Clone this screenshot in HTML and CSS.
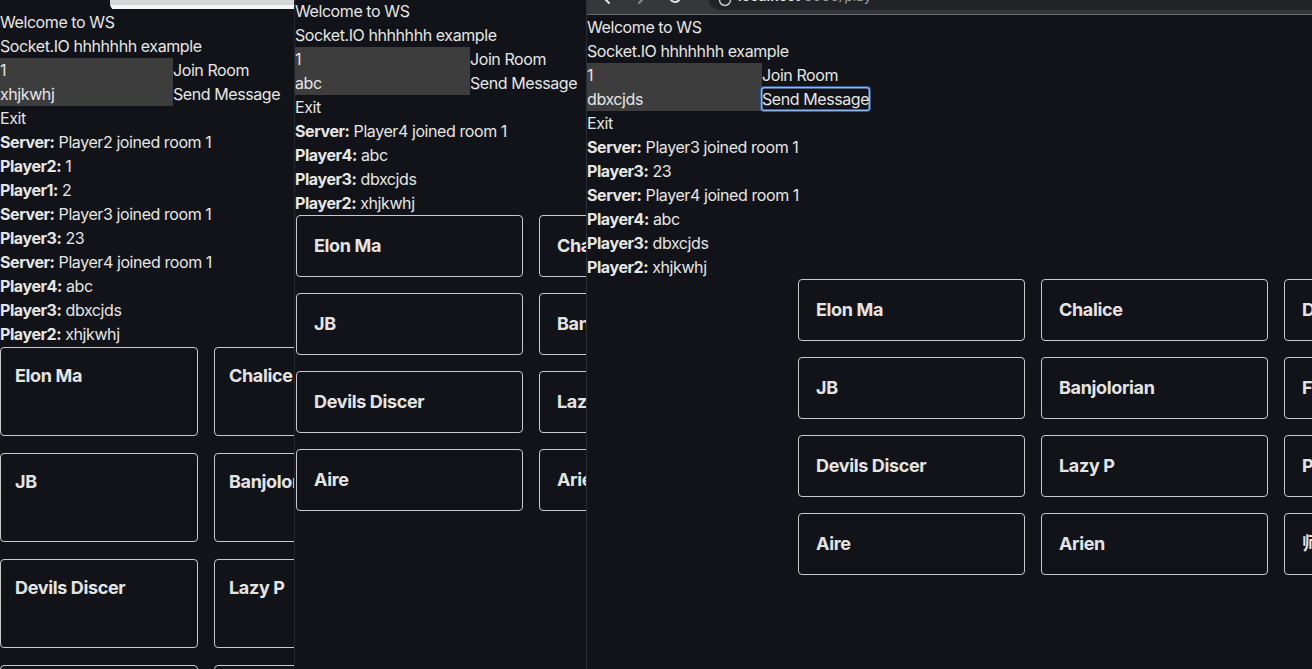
FILE: index.html
```html
<!DOCTYPE html>
<html>
<head>
<meta charset="utf-8">
<title>WS</title>
<link rel="stylesheet" href="styles.css">
</head>
<body>
<div class="screens">
  <section class="pane pane-1">
    <div class="chrome-light"><div class="chrome-light-gap"></div><div class="chrome-light-bar"></div></div>
    <div class="app">
      <div class="line">Welcome to WS</div>
      <div class="line">Socket.IO hhhhhhh example</div>
      <div class="row"><input class="field field-narrow" value="1"><button class="btn">Join Room</button></div>
      <div class="row"><input class="field field-narrow" value="xhjkwhj"><button class="btn">Send Message</button></div>
      <div class="row"><button class="btn">Exit</button></div>
      <ul class="messages">
        <li><b>Server:</b> Player2 joined room 1</li>
        <li><b>Player2:</b> 1</li>
        <li><b>Player1:</b> 2</li>
        <li><b>Server:</b> Player3 joined room 1</li>
        <li><b>Player3:</b> 23</li>
        <li><b>Server:</b> Player4 joined room 1</li>
        <li><b>Player4:</b> abc</li>
        <li><b>Player3:</b> dbxcjds</li>
        <li><b>Player2:</b> xhjkwhj</li>
      </ul>
      <div class="grid grid-tall">
        <div class="card">Elon Ma</div><div class="card">Chalice</div><div class="card">Dragonfly</div>
        <div class="card">JB</div><div class="card">Banjolorian</div><div class="card">Fuzzy</div>
        <div class="card">Devils Discer</div><div class="card">Lazy P</div><div class="card">Pandora</div>
        <div class="card">Aire</div><div class="card">Arien</div><div class="card">师父</div>
      </div>
    </div>
  </section>

  <section class="pane pane-2">
    <div class="app app-up">
      <div class="line">Welcome to WS</div>
      <div class="line">Socket.IO hhhhhhh example</div>
      <div class="row"><input class="field" value="1"><button class="btn">Join Room</button></div>
      <div class="row"><input class="field" value="abc"><button class="btn">Send Message</button></div>
      <div class="row"><button class="btn">Exit</button></div>
      <ul class="messages">
        <li><b>Server:</b> Player4 joined room 1</li>
        <li><b>Player4:</b> abc</li>
        <li><b>Player3:</b> dbxcjds</li>
        <li><b>Player2:</b> xhjkwhj</li>
      </ul>
      <div class="grid grid-short grid-p2">
        <div class="card">Elon Ma</div><div class="card">Chalice</div><div class="card">Dragonfly</div>
        <div class="card">JB</div><div class="card">Banjolorian</div><div class="card">Fuzzy</div>
        <div class="card">Devils Discer</div><div class="card">Lazy P</div><div class="card">Pandora</div>
        <div class="card">Aire</div><div class="card">Arien</div><div class="card">师父</div>
      </div>
    </div>
  </section>

  <section class="pane pane-3">
    <div class="chrome-dark">
      <div class="nav-icons">
        <svg class="nav-icon" width="16" height="16" viewBox="0 0 16 16"><path d="M10 2 L4 8 L10 14" fill="none" stroke="#e3e3e3" stroke-width="2" stroke-linecap="round" stroke-linejoin="round"/></svg>
        <svg class="nav-icon" width="16" height="16" viewBox="0 0 16 16"><path d="M6 2 L12 8 L6 14" fill="none" stroke="#8a8b8e" stroke-width="2" stroke-linecap="round" stroke-linejoin="round"/></svg>
        <svg class="nav-icon" width="16" height="16" viewBox="0 0 16 16"><path d="M13 8 A5 5 0 1 1 11 4" fill="none" stroke="#e3e3e3" stroke-width="2" stroke-linecap="round"/></svg>
      </div>
      <div class="omnibox">
        <svg class="site-icon" width="14" height="14" viewBox="0 0 14 14"><circle cx="7" cy="7" r="5.5" fill="none" stroke="#c4c7c5" stroke-width="1.5"/></svg>
        <span class="url-host">localhost</span><span class="url-rest">:3000/play</span>
      </div>
    </div>
    <div class="app">
      <div class="line">Welcome to WS</div>
      <div class="line">Socket.IO hhhhhhh example</div>
      <div class="row"><input class="field" value="1"><button class="btn">Join Room</button></div>
      <div class="row"><input class="field" value="dbxcjds"><button class="btn btn-focus">Send Message</button></div>
      <div class="row"><button class="btn">Exit</button></div>
      <ul class="messages">
        <li><b>Server:</b> Player3 joined room 1</li>
        <li><b>Player3:</b> 23</li>
        <li><b>Server:</b> Player4 joined room 1</li>
        <li><b>Player4:</b> abc</li>
        <li><b>Player3:</b> dbxcjds</li>
        <li><b>Player2:</b> xhjkwhj</li>
      </ul>
      <div class="grid grid-short grid-p3">
        <div class="card">Elon Ma</div><div class="card">Chalice</div><div class="card">Dragonfly</div>
        <div class="card">JB</div><div class="card">Banjolorian</div><div class="card">Fuzzy</div>
        <div class="card">Devils Discer</div><div class="card">Lazy P</div><div class="card">Pandora</div>
        <div class="card">Aire</div><div class="card">Arien</div><div class="card">师父</div>
      </div>
    </div>
  </section>
</div>
</body>
</html>
```

FILE: styles.css
```css
html, body {
  margin: 0;
  padding: 0;
  background: #111318;
}

body {
  font-family: Inter, "Noto Sans", "Noto Sans CJK SC", sans-serif;
  font-size: 16px;
  line-height: 24px;
  letter-spacing: -0.42px;
  color: #e6e6e6;
  overflow: hidden;
}

.screens {
  display: flex;
  width: 1312px;
  height: 669px;
  overflow: hidden;
}

.pane {
  height: 669px;
  overflow: hidden;
  flex: none;
  display: flex;
  flex-direction: column;
  background: #111318;
}

.pane-1 {
  width: 294px;
  border-right: 1px solid #26282d;
}

.pane-2 {
  width: 291px;
  border-right: 1px solid #2c2e33;
}

.pane-3 {
  width: 725px;
}

/* light browser chrome remnant (pane 1) */
.chrome-light {
  height: 10px;
  display: flex;
  flex: none;
}

.chrome-light-gap {
  width: 110px;
}

.chrome-light-bar {
  flex: 1;
  background: linear-gradient(#d6d6d6 0, #d6d6d6 5px, #f4f4f4 5px, #f4f4f4 9px, #111318 9px);
  border-bottom-left-radius: 6px;
}

/* dark browser chrome remnant (pane 3) */
.chrome-dark {
  height: 14px;
  flex: none;
  display: flex;
  background: #36373b;
  border-bottom: 1px solid #6a6b6e;
  overflow: hidden;
}

.nav-icons {
  width: 110px;
  display: flex;
  gap: 18px;
  padding-left: 12px;
  align-items: flex-end;
}

.nav-icon {
  margin-bottom: 9px;
}

.omnibox {
  flex: 1;
  height: 10px;
  background: #222327;
  border-bottom-left-radius: 12px;
  display: flex;
  align-items: flex-end;
  gap: 6px;
  padding-left: 9px;
  font-size: 14px;
  line-height: 14px;
  letter-spacing: 0;
  white-space: nowrap;
}

.site-icon {
  margin-bottom: 3px;
}

.url-host {
  color: #e8eaed;
  font-weight: 600;
  margin-bottom: 7px;
}

.url-rest {
  color: #9aa0a6;
  margin-bottom: 7px;
  margin-left: -6px;
}

.app {
  display: flex;
  flex-direction: column;
}

.app-up {
  margin-top: -1px;
}

.line {
  height: 24px;
  white-space: nowrap;
}

.row {
  display: flex;
  height: 24px;
  align-items: stretch;
}

.field {
  width: 175px;
  height: 24px;
  box-sizing: border-box;
  border: none;
  margin: 0;
  padding: 0;
  background: #3d3d3d;
  color: #e6e6e6;
  font: inherit;
  letter-spacing: inherit;
  outline: none;
}

.field-narrow {
  width: 173px;
}

.btn {
  background: transparent;
  border: none;
  margin: 0;
  padding: 0 1px 0 0;
  color: #e6e6e6;
  font: inherit;
  letter-spacing: inherit;
  line-height: 24px;
  white-space: nowrap;
  border-radius: 3px;
}

.btn-focus {
  box-shadow: 0 0 0 1px #2f5d9a, inset 0 0 0 1.5px #8db6f2;
  padding: 0 1px;
  margin-left: -1px;
}

.messages {
  list-style: none;
  margin: 0;
  padding: 0;
}

.messages li {
  height: 24px;
  white-space: nowrap;
}

.messages b {
  font-weight: 700;
}

.grid {
  display: grid;
  flex: none;
}

.grid-tall {
  grid-template-columns: repeat(3, 198px);
  grid-auto-rows: 89px;
  column-gap: 16px;
  row-gap: 17px;
  margin-top: 1px;
}

.grid-short {
  grid-template-columns: repeat(3, 227px);
  grid-auto-rows: 62px;
  column-gap: 16px;
  row-gap: 16px;
}

.grid-p2 {
  margin-left: 1px;
}

.grid-p3 {
  margin-left: 211px;
}

.card {
  box-sizing: border-box;
  border: 1px solid #c9c9c9;
  border-radius: 4px;
  font-size: 18px;
  font-weight: 700;
  line-height: 22px;
  letter-spacing: -0.35px;
  color: #e4e4e4;
  white-space: nowrap;
  overflow: hidden;
  padding: 19px 16px 0 17px;
}

.grid-tall .card {
  padding: 17px 14px 0 14px;
}
```
